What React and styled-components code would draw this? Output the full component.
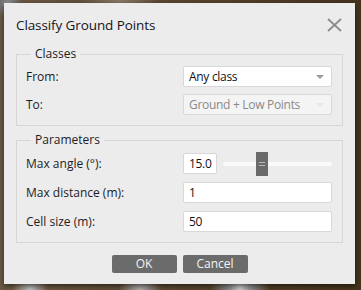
import styled, { createGlobalStyle } from "styled-components";

const GlobalStyle = createGlobalStyle`
  html, body {
    margin: 0;
    padding: 0;
  }
  body {
    font-family: "Open Sans", "Noto Sans", sans-serif;
  }
`;

const Backdrop = styled.div`
  width: 361px;
  height: 290px;
  overflow: hidden;
  padding: 3px 6px 0 4px;
  box-sizing: border-box;
  background:
    radial-gradient(circle at 8px 4px, #9a9a9a 0, #777 6px, transparent 14px),
    radial-gradient(circle at 240px 288px, #d0d0d0 0, #8d8d8d 10px, transparent 30px),
    radial-gradient(circle at 140px 290px, #b0b0b0 0, transparent 22px),
    radial-gradient(circle at 30px 290px, #c4c4c4 0, transparent 18px),
    radial-gradient(circle at 120px 0px, #8a7a68 0, transparent 40px),
    linear-gradient(90deg, #6c5a45, #55412b 60%, #45331e);
`;

const Dialog = styled.div`
  width: 351px;
  height: 281px;
  background: #ececec;
  box-shadow: 0 2px 5px rgba(0, 0, 0, 0.55);
  padding: 0 12px;
  box-sizing: border-box;
  display: flex;
  flex-direction: column;
  color: #1c1c24;
  font-size: 12px;
`;

const Header = styled.div`
  height: 44px;
  display: flex;
  align-items: center;
  justify-content: space-between;
  padding-bottom: 1px;
  box-sizing: border-box;
`;

const Title = styled.h1`
  margin: 0;
  font-size: 13.5px;
  font-weight: 400;
  color: #14141c;
  letter-spacing: -0.1px;
`;

const CloseButton = styled.div`
  width: 16px;
  height: 16px;
  margin-right: 1px;
  display: flex;
  align-items: center;
  justify-content: center;
`;

const Group = styled.fieldset`
  margin: 0 0 7px 0;
  padding: ${(p) => p.$pad};
  min-width: 0;
  border: 1px solid #d6d6d6;
  display: flex;
  flex-direction: column;
  gap: ${(p) => p.$gap};
`;

const Legend = styled.legend`
  font-size: 12px;
  line-height: 14px;
  padding: 0 4px;
  margin-left: 5px;
  color: #1c1c24;
`;

const Row = styled.div`
  display: flex;
  align-items: center;
  height: 21px;
`;

const Label = styled.div`
  width: 157px;
  flex: none;
`;

const Field = styled.div`
  width: 149px;
  height: 21px;
  box-sizing: border-box;
  border: 1px solid #d8d8d8;
  border-radius: 2px;
  background: ${(p) => (p.$disabled ? "#f4f4f4" : "#ffffff")};
  color: ${(p) => (p.$disabled ? "#8a8a8a" : "#111118")};
  display: flex;
  align-items: center;
  padding: 0 5px;
  letter-spacing: -0.3px;
  position: relative;
`;

const Arrow = styled.span`
  position: absolute;
  right: 7px;
  top: 8px;
  width: 0;
  height: 0;
  border-left: 4px solid transparent;
  border-right: 4px solid transparent;
  border-top: 4px solid ${(p) => (p.$disabled ? "#e8e8e8" : "#9b9b9b")};
`;

const SmallField = styled(Field)`
  width: 34px;
`;

const Slider = styled.div`
  margin-left: 6px;
  width: 110px;
  height: 24px;
  position: relative;
  display: flex;
  align-items: center;
`;

const Track = styled.div`
  width: 100%;
  height: 4px;
  border-radius: 2px;
  background: #fafafa;
`;

const Thumb = styled.div`
  position: absolute;
  left: 33px;
  top: 0;
  width: 12px;
  height: 24px;
  background: #6a6a6a;
  display: flex;
  flex-direction: column;
  align-items: center;
  justify-content: center;
  gap: 2px;

  &::before,
  &::after {
    content: "";
    width: 6px;
    height: 1px;
    background: #b8b8b8;
  }
`;

const Footer = styled.div`
  display: flex;
  justify-content: center;
  gap: 6px;
  margin-top: 5px;
`;

const Button = styled.button`
  width: 65px;
  height: 18px;
  border: none;
  border-radius: 2px;
  background: #6b6b6b;
  color: #f4f4f4;
  font-family: inherit;
  font-size: 12px;
  padding: 0;
  line-height: 18px;
`;

const App = () => {
  return (
    <>
      <GlobalStyle />
      <Backdrop>
        <Dialog>
          <Header>
            <Title>Classify Ground Points</Title>
            <CloseButton>
              <svg width="15" height="14" viewBox="0 0 15 14">
                <path
                  d="M1 1 L14 13 M14 1 L1 13"
                  stroke="#8c8c8c"
                  strokeWidth="1.8"
                  fill="none"
                />
              </svg>
            </CloseButton>
          </Header>

          <Group $pad="5px 10px 10px 9px" $gap="7px">
            <Legend>Classes</Legend>
            <Row>
              <Label>From:</Label>
              <Field>
                Any class
                <Arrow />
              </Field>
            </Row>
            <Row>
              <Label>To:</Label>
              <Field $disabled>
                Ground + Low Points
                <Arrow $disabled />
              </Field>
            </Row>
          </Group>

          <Group $pad="6px 10px 10px 9px" $gap="8px">
            <Legend>Parameters</Legend>
            <Row>
              <Label>Max angle (°):</Label>
              <SmallField>15.0</SmallField>
              <Slider>
                <Track />
                <Thumb />
              </Slider>
            </Row>
            <Row>
              <Label>Max distance (m):</Label>
              <Field>1</Field>
            </Row>
            <Row>
              <Label>Cell size (m):</Label>
              <Field>50</Field>
            </Row>
          </Group>

          <Footer>
            <Button>OK</Button>
            <Button>Cancel</Button>
          </Footer>
        </Dialog>
      </Backdrop>
    </>
  );
};

export default App;
